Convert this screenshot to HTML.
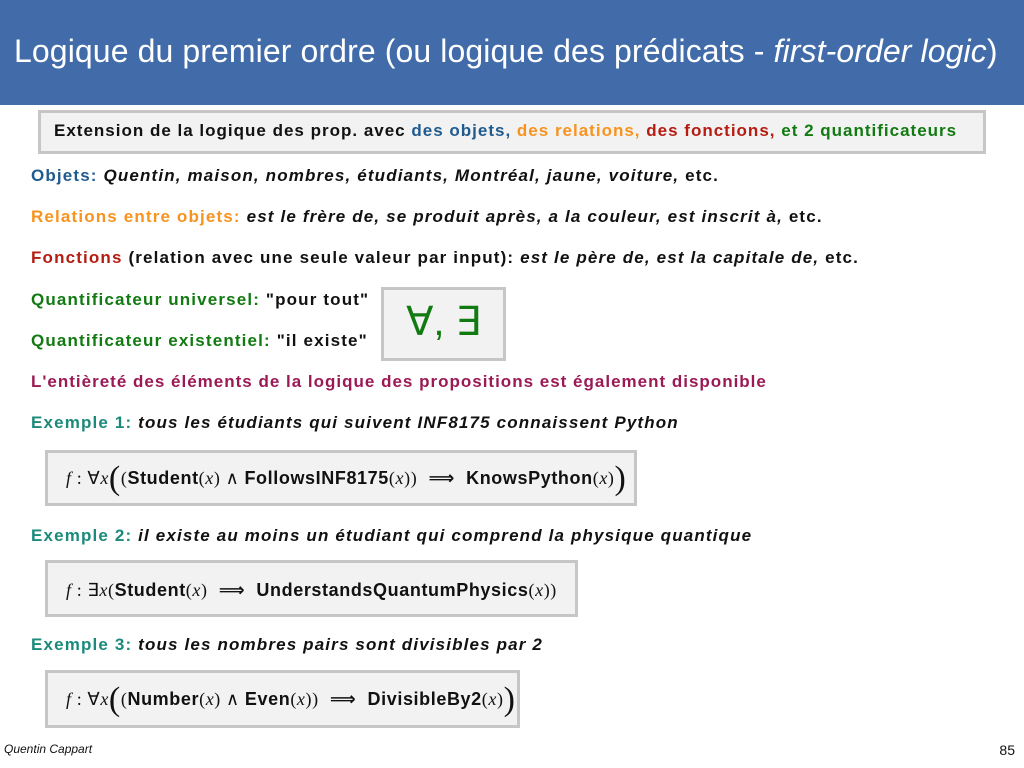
<!DOCTYPE html>
<html><head><meta charset="utf-8"><style>
body{margin:0;width:1024px;height:768px;background:#fff;position:relative;overflow:hidden;font-family:"Liberation Sans","DejaVu Sans",sans-serif;}
.hd{position:absolute;left:0;top:0;width:1024px;height:105px;background:#426ca9;}
.hd div{position:absolute;left:14px;top:33px;color:#fff;font-size:32px;letter-spacing:0.1px;white-space:nowrap;}
.t{position:absolute;left:31px;font-weight:bold;font-size:17px;letter-spacing:1.15px;white-space:nowrap;color:#111;line-height:20px;}
.box{position:absolute;background:#f2f2f2;border:3px solid #c6c6c6;box-sizing:border-box;}
.b{color:#1f5b8f}.o{color:#f7931e}.r{color:#b51c12}.g{color:#117a11}.p{color:#9b1a55}.tl{color:#1b8a7a}
i{font-style:italic}
.m{font-family:"Liberation Serif",serif;font-weight:normal;font-style:italic}
.n{font-family:"Liberation Serif",serif;font-weight:normal}
.f{position:absolute;left:18px;top:14px;font-size:18px;letter-spacing:0.6px;white-space:nowrap;font-weight:bold;color:#111}
.big{font-size:34px;font-family:"Liberation Serif",serif;font-weight:normal;vertical-align:-5px;line-height:20px}
</style></head><body>
<div class="hd"><div>Logique du premier ordre (ou logique des prédicats - <i>first-order logic</i>)</div></div>
<div class="box" style="left:38px;top:110px;width:948px;height:44px"></div>
<div class="t" style="left:54px;top:121px;letter-spacing:1px">Extension de la logique des prop. avec <span class="b">des objets,</span> <span class="o">des relations,</span> <span class="r">des fonctions,</span> <span class="g">et 2 quantificateurs</span></div>
<div class="t" style="top:166px"><span class="b">Objets:</span> <i>Quentin, maison, nombres, étudiants, Montréal, jaune, voiture,</i> etc.</div>
<div class="t" style="top:207px"><span class="o">Relations entre objets:</span> <i>est le frère de, se produit après, a la couleur, est inscrit à,</i> etc.</div>
<div class="t" style="top:248px"><span class="r">Fonctions</span> (relation avec une seule valeur par input): <i>est le père de, est la capitale de,</i> etc.</div>
<div class="t" style="top:290px"><span class="g">Quantificateur universel:</span> "pour tout"</div>
<div class="t" style="top:331px"><span class="g">Quantificateur existentiel:</span> "il existe"</div>
<div class="box" style="left:381px;top:287px;width:125px;height:74px"></div>
<div style="position:absolute;left:381px;top:297px;width:125px;text-align:center;color:#117a11;font-size:40px;line-height:50px">∀, ∃</div>
<div class="t p" style="top:372px;letter-spacing:1px">L'entièreté des éléments de la logique des propositions est également disponible</div>
<div class="t" style="top:413px"><span class="tl">Exemple 1:</span> <i>tous les étudiants qui suivent INF8175 connaissent Python</i></div>
<div class="box" style="left:45px;top:450px;width:592px;height:56px"><div class="f" style="top:15px"><span class="m">f</span><span class="n"> : ∀</span><span class="m">x</span><span class="big">(</span><span class="n">(</span>Student<span class="n">(<i>x</i>) ∧ </span>FollowsINF8175<span class="n">(<i>x</i>))</span> &nbsp;⟹ &nbsp;KnowsPython<span class="n">(<i>x</i>)</span><span class="big">)</span></div></div>
<div class="t" style="top:526px"><span class="tl">Exemple 2:</span> <i>il existe au moins un étudiant qui comprend la physique quantique</i></div>
<div class="box" style="left:45px;top:560px;width:533px;height:57px"><div class="f" style="top:17px"><span class="m">f</span><span class="n"> : ∃</span><span class="m">x</span><span class="n">(</span>Student<span class="n">(<i>x</i>)</span> &nbsp;⟹ &nbsp;UnderstandsQuantumPhysics<span class="n">(<i>x</i>))</span></div></div>
<div class="t" style="top:635px"><span class="tl">Exemple 3:</span> <i>tous les nombres pairs sont divisibles par 2</i></div>
<div class="box" style="left:45px;top:670px;width:475px;height:58px"><div class="f" style="top:16px"><span class="m">f</span><span class="n"> : ∀</span><span class="m">x</span><span class="big">(</span><span class="n">(</span>Number<span class="n">(<i>x</i>) ∧ </span>Even<span class="n">(<i>x</i>))</span> &nbsp;⟹ &nbsp;DivisibleBy2<span class="n">(<i>x</i>)</span><span class="big">)</span></div></div>
<div style="position:absolute;left:4px;top:742px;font-size:12px;font-style:italic;color:#111">Quentin Cappart</div>
<div style="position:absolute;right:9px;top:742px;font-size:14px;color:#111">85</div>
</body></html>
